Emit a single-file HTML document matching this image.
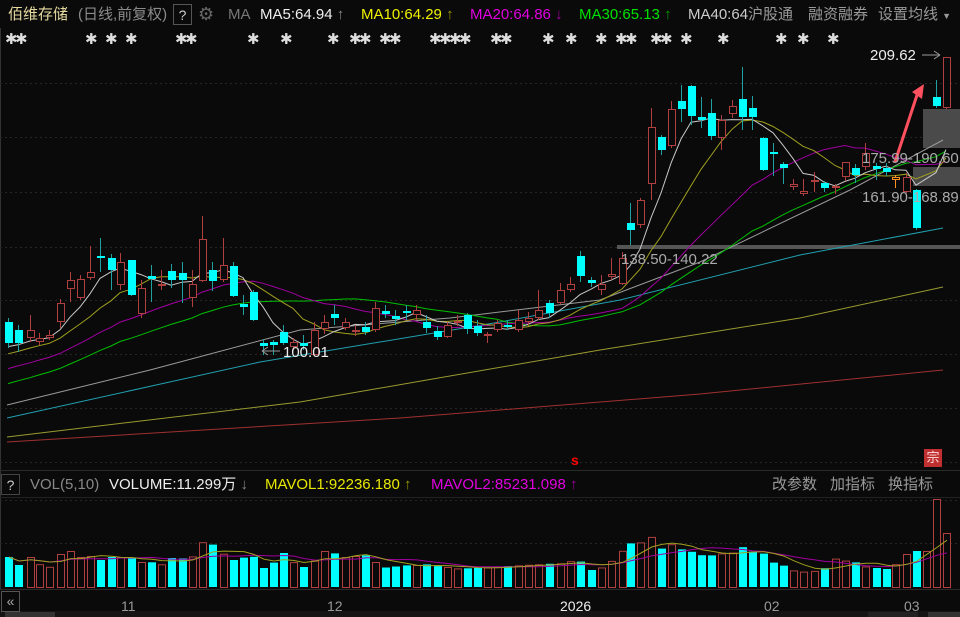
<!DOCTYPE html>
<html><head><meta charset="utf-8">
<style>
html,body{margin:0;padding:0;background:#0a0a0a;}
#w{position:relative;width:960px;height:617px;overflow:hidden;background:#0a0a0a;font-family:"Liberation Sans","Noto Sans CJK SC",sans-serif;}
.t{position:absolute;white-space:nowrap;font-size:15px;line-height:20px;}
svg{position:absolute;left:0;top:0;}
</style></head><body><div id="w">
<svg id="s" width="960" height="617" xmlns="http://www.w3.org/2000/svg"></svg>
<div class="t" style="left:8px;top:5px;color:#e6d9a0;">佰维存储</div>
<div class="t" style="left:78px;top:5px;color:#8a8a8a;">(日线,前复权)</div>
<div class="t" style="left:173px;top:4px;width:17px;height:19px;border:1px solid #555;color:#ccc;text-align:center;font-size:14px;">?</div>
<div class="t" style="left:198px;top:4px;color:#666;font-size:18px;">⚙</div>
<div class="t" style="left:228px;top:5px;color:#777;">MA</div>
<div class="t" style="left:260px;top:5px;color:#eee;">MA5:64.94 <span style="color:#888">↑</span></div>
<div class="t" style="left:361px;top:5px;color:#f0f000;">MA10:64.29 <span style="color:#999900">↑</span></div>
<div class="t" style="left:470px;top:5px;color:#e000e0;">MA20:64.86 <span style="color:#a000a0">↓</span></div>
<div class="t" style="left:579px;top:5px;color:#00e000;">MA30:65.13 <span style="color:#00a000">↑</span></div>
<div class="t" style="left:688px;top:5px;color:#ccc;">MA40:64<span style="color:#999">沪股通</span></div>
<div class="t" style="left:808px;top:5px;color:#999;">融资融券</div>
<div class="t" style="left:878px;top:5px;color:#999;">设置均线 <span style="font-size:9px">▼</span></div>
<div class="t" style="left:1px;top:474px;width:17px;height:19px;border:1px solid #444;color:#ccc;text-align:center;font-size:14px;">?</div>
<div class="t" style="left:30px;top:475px;color:#888;">VOL(5,10)</div>
<div class="t" style="left:109px;top:475px;color:#eee;">VOLUME:11.299万 <span style="color:#888">↓</span></div>
<div class="t" style="left:265px;top:475px;color:#e8e800;">MAVOL1:92236.180 <span style="color:#999900">↑</span></div>
<div class="t" style="left:431px;top:475px;color:#e000e0;">MAVOL2:85231.098 <span style="color:#a000a0">↑</span></div>
<div class="t" style="left:772px;top:475px;color:#999;">改参数</div>
<div class="t" style="left:830px;top:475px;color:#999;">加指标</div>
<div class="t" style="left:888px;top:475px;color:#999;">换指标</div>
<div class="t" style="left:870px;top:46px;color:#eee;font-size:15px;">209.62</div>
<div class="t" style="left:283px;top:343px;color:#eee;">100.01</div>
<div class="t" style="left:621px;top:250px;color:#aaa;">138.50-140.22</div>
<div class="t" style="left:862px;top:149px;color:#aaa;">175.99-190.60</div>
<div class="t" style="left:862px;top:188px;color:#aaa;">161.90-168.89</div>
<div class="t" style="left:121px;top:596px;color:#999;font-size:14px;">11</div>
<div class="t" style="left:327px;top:596px;color:#999;font-size:14px;">12</div>
<div class="t" style="left:560px;top:596px;color:#eee;font-size:14px;">2026</div>
<div class="t" style="left:764px;top:596px;color:#999;font-size:14px;">02</div>
<div class="t" style="left:904px;top:596px;color:#999;font-size:14px;">03</div>
<div class="t" style="left:924px;top:449px;width:18px;height:18px;background:#c03030;color:#fdd;font-size:13px;line-height:18px;text-align:center;">宗</div>
<div class="t" style="left:571px;top:450px;color:#f00;font-size:14px;font-weight:bold;">s</div>
<div class="t" style="left:1px;top:591px;width:17px;height:19px;border:1px solid #555;color:#aaa;font-size:14px;text-align:center;line-height:18px;">«</div>
</div>
<script>
var s=document.getElementById('s'),h='';
function L(x1,y1,x2,y2,c,w,d){h+='<line x1="'+x1+'" y1="'+y1+'" x2="'+x2+'" y2="'+y2+'" stroke="'+c+'" stroke-width="'+(w||1)+'"'+(d?' stroke-dasharray="'+d+'"':'')+'/>';}
function R(x,y,w,hh,f,st){h+='<rect x="'+x+'" y="'+y+'" width="'+w+'" height="'+hh+'" fill="'+f+'"'+(st?' stroke="'+st+'"':'')+'/>';}
L(0.5,28,0.5,590,'#333');
L(0,470.5,960,470.5,'#2a2a2a');L(0,497.5,960,497.5,'#222');
L(0,589.5,960,589.5,'#2a2a2a');
[83,137,192,247,300,354,408,462].forEach(function(y){L(0,y+.5,960,y+.5,'#262626',1,'2,3');});
[543,500].forEach(function(y){L(0,y+.5,960,y+.5,'#262626',1,'2,3');});
R(0,611,960,6,'#151515');R(5,612,50,5,'#333');R(868,612,50,5,'#222');R(928,612,32,5,'#333');
R(617,245,343,4,'#555');R(923,109,37,39,'#4a4a4a');R(913,167,47,19,'#4a4a4a');
var C=[[5,322,343,318,348,'c'],[15,330,343,325,352,'c'],[27,330,338,315,342,'r'],[36,338,342,333,345,'r'],[46,335,338,330,340,'r'],[57,303,322,299,328,'r'],[67,280,289,272,302,'r'],[77,279,298,275,300,'r'],[87,272,278,246,280,'r'],[97,256,258,238,272,'c'],[108,258,270,254,290,'c'],[117,262,285,253,290,'r'],[128,260,295,260,296,'c'],[138,288,314,280,318,'r'],[148,276,279,265,302,'c'],[158,284,286,270,290,'r'],[168,271,280,264,288,'c'],[179,273,280,262,303,'c'],[189,284,298,270,307,'r'],[199,239,281,216,282,'r'],[209,270,281,262,291,'c'],[220,265,280,238,282,'r'],[230,266,296,262,297,'c'],[240,304,307,295,315,'c'],[250,292,320,290,321,'c'],[260,343,346,339,355,'c'],[270,342,345,340,355,'c'],[280,332,343,325,345,'c'],[290,342,347,338,350,'r'],[300,343,346,335,350,'c'],[311,330,355,322,356,'r'],[321,322,329,315,334,'r'],[331,314,318,305,325,'c'],[342,322,328,318,330,'r'],[352,330,332,325,336,'r'],[362,327,332,322,335,'c'],[372,308,330,302,332,'r'],[382,311,314,305,318,'c'],[392,316,319,310,325,'c'],[403,311,312,305,320,'c'],[413,310,315,305,320,'r'],[423,322,328,315,333,'c'],[434,331,337,326,340,'c'],[444,325,337,322,338,'r'],[454,321,323,315,326,'r'],[464,315,329,313,334,'c'],[474,326,333,320,336,'c'],[484,334,336,332,343,'r'],[494,323,330,320,332,'r'],[504,325,327,320,330,'c'],[515,320,330,310,332,'r'],[525,318,322,312,326,'r'],[535,310,318,290,320,'r'],[546,303,313,300,318,'c'],[557,290,303,283,304,'r'],[567,284,290,277,292,'r'],[577,256,276,251,282,'c'],[588,280,283,277,287,'c'],[598,284,290,275,295,'r'],[608,274,277,258,280,'r'],[619,258,284,252,285,'r'],[627,223,230,203,245,'c'],[637,200,225,198,228,'r'],[648,127,184,108,200,'r'],[658,137,150,135,155,'c'],[668,109,146,101,148,'r'],[678,101,109,85,122,'c'],[688,86,116,85,125,'c'],[698,117,120,97,128,'c'],[708,113,136,99,140,'c'],[718,120,138,115,150,'r'],[729,106,114,100,118,'r'],[739,99,117,67,130,'c'],[749,108,117,96,130,'c'],[760,138,170,137,171,'c'],[770,152,154,143,176,'c'],[780,164,168,162,184,'c'],[790,184,187,179,190,'r'],[800,191,194,179,196,'r'],[811,180,182,172,192,'r'],[821,183,188,181,192,'c'],[832,186,188,184,194,'r'],[842,162,177,162,181,'r'],[852,168,175,164,183,'c'],[862,153,167,143,170,'r'],[873,166,169,163,180,'c'],[883,168,172,163,176,'c'],[892,177,180,175,188,'o'],[903,177,192,173,193,'r'],[913,190,228,189,230,'c'],[933,97,106,80,108,'c'],[943,57,108,57,109,'r']];
var cy='#00ffff',rd='#b04040';
var pre=[];for(var k=0;k<30;k++)pre.push(430-k*3);
var cl=pre.concat(C.map(function(c){return c[5]=='r'?c[1]:c[2];}));
function ma(n){return cl.map(function(_,i){var a=Math.max(0,i-n+1),t=0;for(var j=a;j<=i;j++)t+=cl[j];return t/(i-a+1);}).slice(30);}
function poly(pts,c){h+='<polyline fill="none" stroke="'+c+'" stroke-width="1" points="'+pts.map(function(p){return p[0]+','+p[1].toFixed(1);}).join(' ')+'"/>';}
function maLine(n,c){var m=ma(n),p=[];C.forEach(function(cc,i){p.push([cc[0]+3,m[i]]);});poly(p,c);}
poly([[7,442],[400,418],[700,394],[943,370]],'#a03030');
poly([[7,437],[300,402],[600,350],[800,318],[943,287]],'#9a9a30');
poly([[7,418],[260,362],[500,322],[620,300],[800,255],[943,228]],'#20a0b0');
poly([[7,405],[150,370],[300,330],[450,318],[600,300],[700,262],[850,190],[943,140]],'#9a9a9a');
maLine(30,'#00c000');maLine(20,'#a000a0');maLine(10,'#a0a020');maLine(5,'#c8c8c8');
C.forEach(function(c){var x=c[0],col=c[5]=='c'?cy:(c[5]=='o'?'#ff9020':rd);
L(x+3.5,c[3],x+3.5,c[4],c[5]=='c'?'#20a0a0':col);
var hh=Math.max(2,c[2]-c[1]);
if(c[5]=='c')R(x,c[1],8,hh,cy);else R(x+.5,c[1]+.5,7,hh-1,'#0a0a0a',col);});
L(895,162,918,92,'#ff5060',3);h+='<polygon points="912,92 924,84 922,99" fill="#ff5060"/>';
L(922,55,940,55,'#999');L(934,51,940,55,'#999');L(934,59,940,55,'#999');
L(262,351,280,351,'#999');L(262,351,268,347,'#999');L(262,351,268,355,'#999');
[5,15,85,105,125,175,185,247,280,327,349,359,379,389,429,439,449,459,490,500,542,565,595,615,625,650,660,680,717,775,797,827].forEach(function(x){h+='<text x="'+x+'" y="44" fill="#ddd" font-size="15" font-weight="bold" font-family="DejaVu Sans">✱</text>';});
var VP=[[5,557],[15,565],[27,557],[37,565],[47,567],[57,554],[67,551],[77,557],[87,556],[97,560],[107,557],[117,557],[127,557],[137,562],[147,562],[157,565],[167,558],[177,558],[187,560],[197,542],[207,543],[217,551],[227,560],[237,560],[247,552],[257,568],[267,568],[277,550],[287,560],[297,567],[307,567],[317,551],[327,551],[337,557],[347,557],[357,555],[367,556],[377,568],[387,567],[397,566],[407,565],[417,565],[427,564],[437,567],[447,567],[457,569],[467,568],[477,568],[520,565],[563,563],[574,558],[584,570],[594,570],[605,563],[615,556],[625,543],[635,545],[645,532],[656,550],[666,543],[676,549],[686,551],[696,555],[706,556],[716,553],[726,555],[737,546],[747,552],[757,550],[767,562],[777,564],[788,570],[798,572],[808,570],[818,573],[828,557],[838,561],[848,560],[858,566],[868,567],[878,569],[888,569],[898,557],[908,551],[918,551],[933,499],[943,533]];
function vi(x){for(var i=0;i<VP.length-1;i++){if(x<=VP[i+1][0]){var a=VP[i],b=VP[i+1],t=(x-a[0])/(b[0]-a[0]||1);return a[1]+(b[1]-a[1])*Math.max(0,Math.min(1,t));}}return VP[VP.length-1][1];}
var vv=[];
C.forEach(function(c){var x=c[0],y=vi(x);vv.push(y);var red=c[5]!='c'||x>=930;
if(!red)R(x,y,8,587-y,cy);else R(x+.5,y+.5,7,587-y,'#0a0a0a',rd);});
R(923.5,551.5,7,36,'#0a0a0a',rd);
function vma(n){return vv.map(function(_,i){var a=Math.max(0,i-n+1),t=0;for(var j=a;j<=i;j++)t+=vv[j];return t/(i-a+1);});}
var m1=vma(5),m2=vma(10);
poly(C.map(function(c,i){return [c[0]+4,m2[i]];}),'#a000a0');
poly(C.map(function(c,i){return [c[0]+4,m1[i]];}),'#a0a020');
s.innerHTML=h;
</script>
</body></html>
